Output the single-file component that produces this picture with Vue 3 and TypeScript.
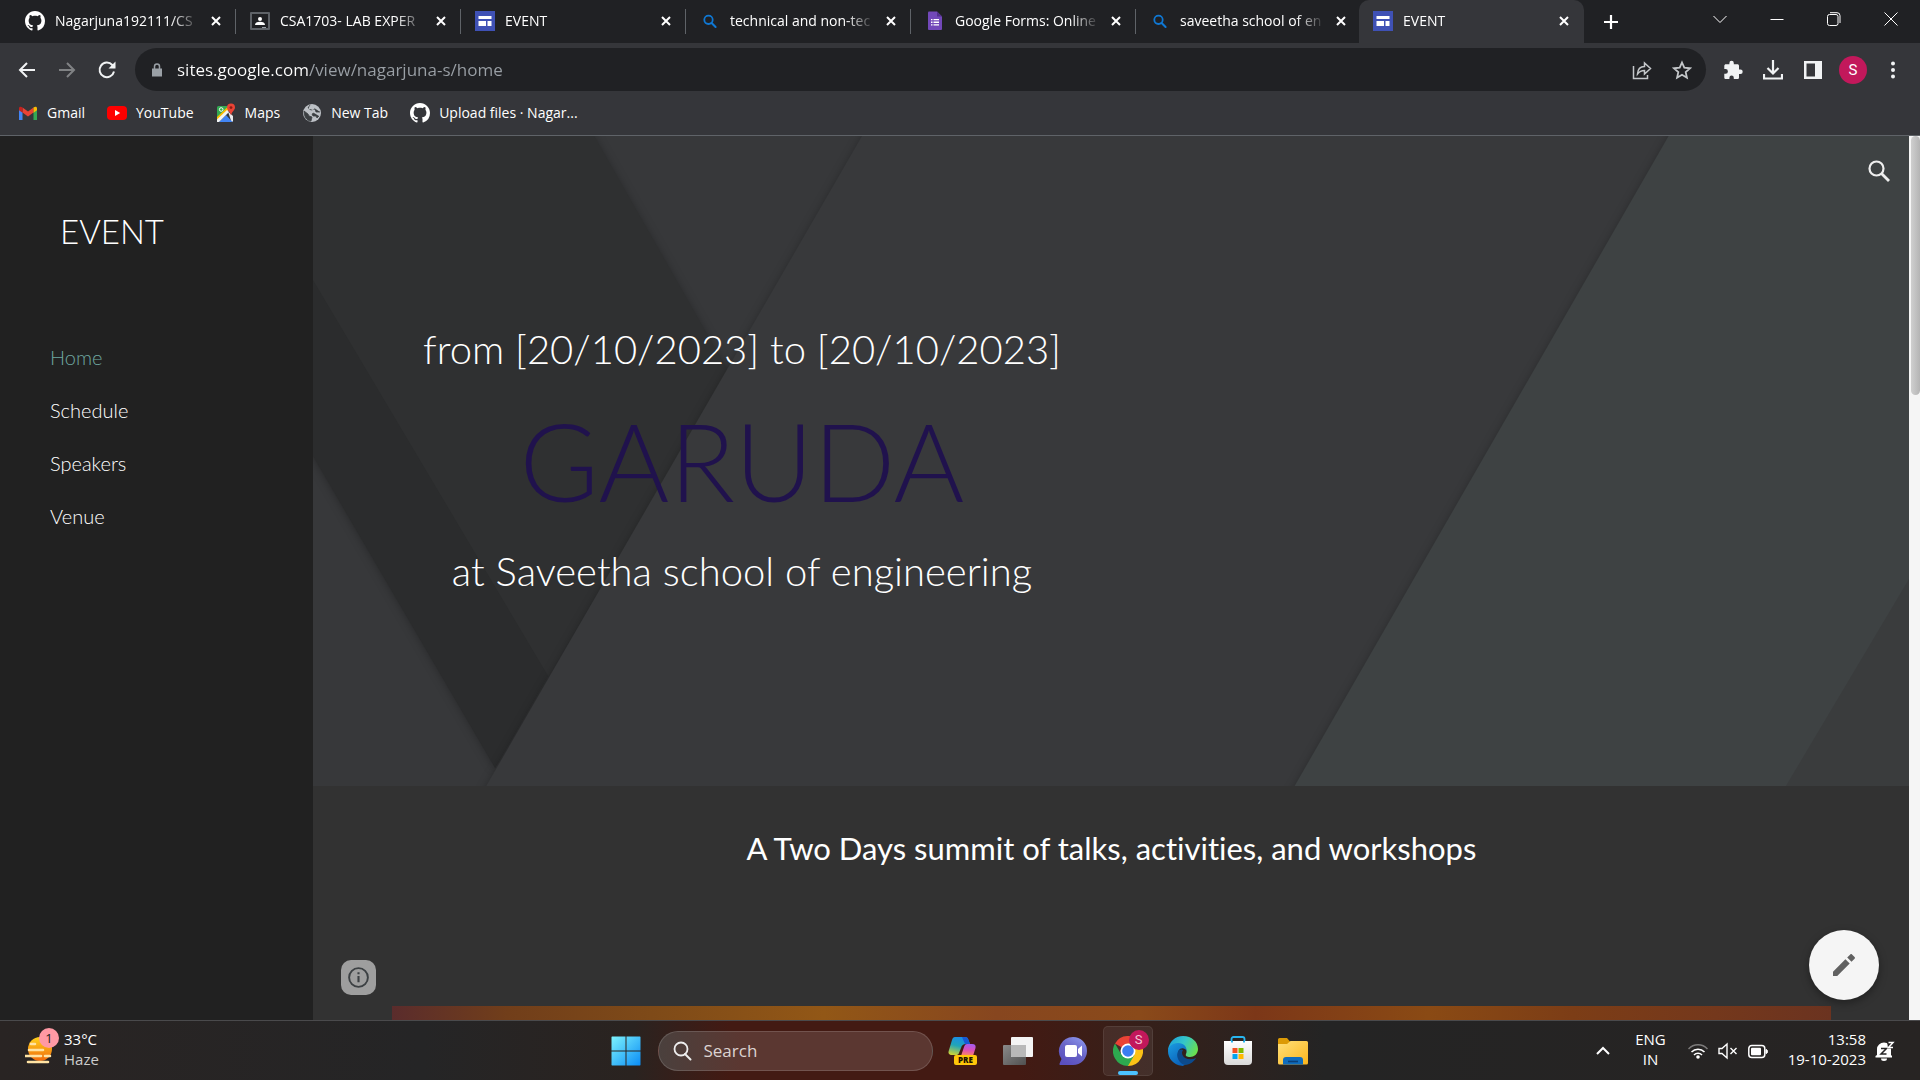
<script setup lang="ts">
import { ref } from 'vue'

interface Tab {
  title: string
  icon: string
  active?: boolean
}

const tabs: Tab[] = [
  { title: 'Nagarjuna192111/CS', icon: 'github' },
  { title: 'CSA1703- LAB EXPER', icon: 'classroom' },
  { title: 'EVENT', icon: 'sites' },
  { title: 'technical and non-tec', icon: 'lens' },
  { title: 'Google Forms: Online', icon: 'forms' },
  { title: 'saveetha school of en', icon: 'lens' },
  { title: 'EVENT', icon: 'sites', active: true },
]

const bookmarks = [
  { label: 'Gmail', icon: 'gmail' },
  { label: 'YouTube', icon: 'youtube' },
  { label: 'Maps', icon: 'maps' },
  { label: 'New Tab', icon: 'globe' },
  { label: 'Upload files · Nagar...', icon: 'github' },
]

const pages = ['Home', 'Schedule', 'Speakers', 'Venue']
const currentPage = ref('Home')
const address = ref('sites.google.com/view/nagarjuna-s/home')
const query = ref('')

const apps = [
  { name: 'Copilot', icon: 'copilot' },
  { name: 'Task view', icon: 'taskview' },
  { name: 'Chat', icon: 'chat' },
  { name: 'Google Chrome', icon: 'chrome', running: true },
  { name: 'Microsoft Edge', icon: 'edge' },
  { name: 'Microsoft Store', icon: 'store' },
  { name: 'File Explorer', icon: 'explorer' },
]
</script>

<template>
  <div class="desktop">
    <svg class="sprite" aria-hidden="true">
      <defs>
        <linearGradient id="gWin" x1="0" y1="0" x2="1" y2="1">
          <stop offset="0" stop-color="#7df3fd" /><stop offset="1" stop-color="#0a8cf5" />
        </linearGradient>
        <linearGradient id="gSun" x1="0" y1="0" x2="0" y2="1">
          <stop offset="0" stop-color="#ffd21c" /><stop offset="1" stop-color="#f06a0c" />
        </linearGradient>
        <linearGradient id="gCopL" x1="0.6" y1="0" x2="0.3" y2="1">
          <stop offset="0" stop-color="#1b8be8" /><stop offset="0.5" stop-color="#20a5b8" /><stop offset="1" stop-color="#c9d23a" />
        </linearGradient>
        <linearGradient id="gCopR" x1="0.5" y1="0" x2="0.4" y2="1">
          <stop offset="0" stop-color="#a45cf0" /><stop offset="0.5" stop-color="#dd4fb8" /><stop offset="1" stop-color="#fb8a5c" />
        </linearGradient>
        <linearGradient id="gTaskB" x1="0" y1="0" x2="1" y2="1">
          <stop offset="0" stop-color="#8a8a8a" /><stop offset="1" stop-color="#505050" />
        </linearGradient>
        <linearGradient id="gChat" x1="0.9" y1="0" x2="0.3" y2="1">
          <stop offset="0" stop-color="#8f9bf0" /><stop offset="0.5" stop-color="#6a66c8" /><stop offset="1" stop-color="#5a4fbe" />
        </linearGradient>
        <linearGradient id="gEdgeT" x1="0" y1="0.2" x2="1" y2="0.6">
          <stop offset="0" stop-color="#1c9fdc" /><stop offset="0.5" stop-color="#35c6c8" /><stop offset="1" stop-color="#6ae04e" />
        </linearGradient>
        <linearGradient id="gEdgeB" x1="0" y1="0" x2="0.6" y2="1">
          <stop offset="0" stop-color="#1b9de2" /><stop offset="1" stop-color="#0a60b8" />
        </linearGradient>
        <linearGradient id="gStore" x1="0" y1="0" x2="0" y2="1">
          <stop offset="0" stop-color="#ffffff" /><stop offset="1" stop-color="#d9d9d9" />
        </linearGradient>
        <linearGradient id="gFold" x1="0" y1="0" x2="1" y2="1">
          <stop offset="0" stop-color="#ffe07a" /><stop offset="1" stop-color="#fbb51c" />
        </linearGradient>
      </defs>
      <symbol id="i-github" viewBox="0 0 16 16">
        <path fill="#fff" d="M8 0C3.58 0 0 3.58 0 8c0 3.54 2.29 6.53 5.47 7.59.4.07.55-.17.55-.38 0-.19-.01-.82-.01-1.49-2.01.37-2.53-.49-2.69-.94-.09-.23-.48-.94-.82-1.13-.28-.15-.68-.52-.01-.53.63-.01 1.08.58 1.23.82.72 1.21 1.87.87 2.33.66.07-.52.28-.87.51-1.07-1.78-.2-3.64-.89-3.64-3.95 0-.87.31-1.59.82-2.15-.08-.2-.36-1.02.08-2.12 0 0 .67-.21 2.2.82.64-.18 1.32-.27 2-.27s1.36.09 2 .27c1.53-1.04 2.2-.82 2.2-.82.44 1.1.16 1.92.08 2.12.51.56.82 1.27.82 2.15 0 3.07-1.87 3.75-3.65 3.95.29.25.54.73.54 1.48 0 1.07-.01 1.93-.01 2.2 0 .21.15.46.55.38A8.01 8.01 0 0 0 16 8c0-4.42-3.58-8-8-8z" />
      </symbol>
      <symbol id="i-classroom" viewBox="0 0 20 20">
        <rect y="1" width="20" height="18" rx="1" fill="#5f6368" /><rect x="2" y="3" width="16" height="14" fill="#202124" />
        <circle cx="10" cy="8" r="2" fill="#fff" /><path d="M5 14c0-2 2-3.200 5-3.200s5 1.200 5 3.200z" fill="#fff" /><path d="M12 16h4v1h-4z" fill="#9aa0a6" />
      </symbol>
      <symbol id="i-sites" viewBox="0 0 20 20">
        <rect width="20" height="20" fill="#3f51b5" /><path d="M3.500 5h13v3h-13zM3.500 10h7.500v5H3.500zM12.500 10h4v5h-4z" fill="#fff" />
      </symbol>
      <symbol id="i-lens" viewBox="0 0 20 20">
        <circle cx="8.500" cy="8.800" r="4.200" fill="none" stroke="#0f78d4" stroke-width="1.800" /><path d="M11.600 12l4 4" stroke="#0f78d4" stroke-width="2" stroke-linecap="round" />
      </symbol>
      <symbol id="i-forms" viewBox="0 0 20 20">
        <path d="M3 1.500a1 1 0 0 1 1-1h8l5 5V18a1 1 0 0 1-1 1H4a1 1 0 0 1-1-1z" fill="#7248b9" /><path d="M12 .5l5 5h-5z" fill="#52308c" />
        <path d="M6 8h1.500v1.300H6zM6 10.600h1.500v1.300H6zM6 13.200h1.500v1.300H6zM8.500 8H14v1.300H8.500zM8.500 10.600H14v1.300H8.500zM8.500 13.200H14v1.300H8.500z" fill="#fff" />
      </symbol>
      <symbol id="i-gmail" viewBox="0 0 20 20">
        <path d="M1 17h3.500V9L1 6z" fill="#4285f4" /><path d="M15.500 17H19V6l-3.500 3z" fill="#34a853" />
        <path d="M4.500 4.500L10 8.600l5.500-4.100v5L10 13.500 4.500 9.500z" fill="#ea4335" /><path d="M1 5.200v2l3.500 2.600V4.500C2.600 3 1 3.700 1 5.200z" fill="#c5221f" /><path d="M19 5.200v2l-3.500 2.600V4.500C17.400 3 19 3.700 19 5.200z" fill="#fbbc04" />
      </symbol>
      <symbol id="i-youtube" viewBox="0 0 20 20">
        <rect y="3" width="20" height="14" rx="4" fill="#f00" /><path d="M8 7l5.200 3L8 13z" fill="#fff" />
      </symbol>
      <symbol id="i-maps" viewBox="0 0 20 20">
        <path d="M1 4.500A1.500 1.500 0 0 1 2.500 3H12v5l-11 10z" fill="#34a853" /><path d="M12 8.500l5 4.500v4.500a1.500 1.500 0 0 1-1.500 1.500z" fill="#e8eaed" /><path d="M3 19l7-7 6.500 7z" fill="#4285f4" /><path d="M1 14L12 3.500l1.500 3L1 18z" fill="#fbbc04" /><path d="M1 16.500l10-9.500 2 2L3 19H1z" fill="#f1f3f4" />
        <circle cx="5.200" cy="6.500" r="1.800" fill="none" stroke="#fff" /><path d="M15 .6a4 4 0 0 0-4 4c0 2.800 3 3.600 4 8 1-4.400 4-5.200 4-8a4 4 0 0 0-4-4z" fill="#ea4335" /><circle cx="15" cy="4.600" r="1.400" fill="#8c1d14" />
      </symbol>
      <symbol id="i-globe" viewBox="0 0 20 20">
        <circle cx="10" cy="10" r="9" fill="#bdc1c6" /><path d="M2 8l4 3 1 2 3 1-1 4c-4 0-7-4-7-10zM8 2l-2 3 3 2 4-1 1 3 4 0M12 10l-2 1 1 2h3l1 2 2-2" fill="#3c4043" stroke="#3c4043" stroke-width=".8" />
        <path d="M8 2c2 1 4 1 5 3l-2 2-3-1-2 1z" fill="#bdc1c6" />
      </symbol>
      <symbol id="i-copilot" viewBox="0 0 30 30">
        <path d="M7 1h10c2 0 3 1 3.500 3L22 8h-4c-3 0-4 1-5 4l-2 5c-.5 1.500-1.500 2-3 2H4c-3 0-4-2-3.300-4L4 4c.6-2 1.500-3 3-3z" fill="url(#gCopL)" />
        <path d="M14 1h3c2 0 3 1 3.500 3L22 8h-5z" fill="#1759d6" />
        <path d="M19 8h5c3 0 4 1.500 3.500 4l-2.500 8H13l3-9c.7-2 1.500-3 3-3z" fill="url(#gCopR)" />
        <rect x="6" y="19" width="23" height="10" rx="2" fill="#ffc70a" />
        <text x="17.500" y="27" text-anchor="middle" font-family="Open Sans, sans-serif" font-size="8" font-weight="800" fill="#1c1200">PRE</text>
      </symbol>
      <symbol id="i-taskview" viewBox="0 0 30 30">
        <rect y="9" width="23" height="20" rx="1" fill="url(#gTaskB)" /><rect x="8" y="1" width="22" height="20" rx="1" fill="#f4f4f4" /><path d="M8 9h15v12H9a1 1 0 0 1-1-1z" fill="#b9b9b9" />
      </symbol>
      <symbol id="i-chat" viewBox="0 0 30 30">
        <path d="M15 1a14 14 0 1 1 0 28H2.500c-1 0-1.400-1-.8-1.800L3.500 23A14 14 0 0 1 15 1z" fill="url(#gChat)" />
        <rect x="7" y="9" width="12" height="12" rx="2" fill="#fff" /><path d="M20 13l4-3.500v11L20 17z" fill="#fff" />
      </symbol>
      <symbol id="i-chrome" viewBox="0 0 30 30">
        <path d="M15 15L2 7.500A15 15 0 0 1 28 7.500H15z" fill="#ea4335" /><path d="M15 15V7.500h13A15 15 0 0 1 15 30z" fill="#fbc116" /><path d="M2 7.500A15 15 0 0 0 15 30l6.500-11.200L15 15 8.500 18.800z" fill="#2da94f" />
        <circle cx="15" cy="15" r="7.500" fill="#fff" /><circle cx="15" cy="15" r="5.800" fill="#3b7df0" />
      </symbol>
      <symbol id="i-edge" viewBox="0 0 30 30">
        <path d="M0 14C1 6 7 0 15 0c9 0 15 6 15 13 0 5-4 8-8 8-3 0-5-1-4-3 2-4-1-8-6-8C6 10 1 13 0 14z" fill="url(#gEdgeT)" />
        <path d="M0 15c0-4 4-8 10-8 6 0 9 4 8.500 8-1-3-6-4-8 0-2 5 1 11 7 13-1.500 2-3 2-4 1.800C6 29 0 23 0 15z" fill="url(#gEdgeB)" />
        <path d="M10.500 14.500C7 20 11 27.500 17 29c5 0 9.500-4 11-7-5 2.500-11.500 1.500-13.500-3-.8-2-.5-3.500.5-5-1.500-.8-3.500-.5-4.500.5z" fill="#0c4a8c" />
      </symbol>
      <symbol id="i-store" viewBox="0 0 30 30">
        <path d="M8.500 6V3a2 2 0 0 1 2-2h9a2 2 0 0 1 2 2v3" fill="none" stroke="#28b6f0" stroke-width="1.800" /><path d="M1 5h28v20a4 4 0 0 1-4 4H5a4 4 0 0 1-4-4z" fill="url(#gStore)" /><path d="M8 5h2v1.500H8zM20 5h2v1.500h-2z" fill="#28b6f0" />
        <path d="M9.500 12h5v5h-5z" fill="#f25022" /><path d="M15.500 12h5v5h-5z" fill="#7fba00" /><path d="M9.500 18h5v5h-5z" fill="#00a4ef" /><path d="M15.500 18h5v5h-5z" fill="#ffb900" />
      </symbol>
      <symbol id="i-explorer" viewBox="0 0 30 30">
        <path d="M0 8V3.500A1.500 1.500 0 0 1 1.500 2H9l3 3.500V8z" fill="#dc9a06" /><path d="M0 8h9l3.500-3H28.500A1.500 1.500 0 0 1 30 6.500V27a1.500 1.500 0 0 1-1.500 1.500h-27A1.500 1.500 0 0 1 0 27z" fill="url(#gFold)" />
        <path d="M5 28.500V24a3 3 0 0 1 3-3h14a3 3 0 0 1 3 3v4.500z" fill="#0f6cbd" /><path d="M10 25.500h10" stroke="#0a3f78" stroke-width="1.600" />
      </symbol>
    </svg>

    <header class="browser">
      <div class="tab-strip">
        <div class="tabs" role="tablist">
          <div v-for="(tab, i) in tabs" :key="i" class="tab" :class="{ active: tab.active }">
            <svg class="favicon"><use :href="'#i-' + tab.icon" /></svg>
            <span class="tab-title">{{ tab.title }}</span>
            <button class="close" aria-label="Close tab">
              <svg viewBox="0 0 12 12"><path d="M2 2l8 8M10 2l-8 8" stroke="#fff" stroke-width="2" /></svg>
            </button>
          </div>
        </div>
        <button class="new-tab" aria-label="New tab">
          <svg viewBox="0 0 16 16"><path d="M8 1v14M1 8h14" stroke="#fff" stroke-width="2.200" /></svg>
        </button>
        <div class="window-controls">
          <button aria-label="Search tabs"><svg viewBox="0 0 14 14"><path d="M.5 4L7 10.500 13.500 4" /></svg></button>
          <button aria-label="Minimize"><svg viewBox="0 0 14 14"><path d="M.5 7.500h13" /></svg></button>
          <button aria-label="Restore"><svg viewBox="0 0 14 14"><rect x=".5" y="2.500" width="10.500" height="11" rx="2" /><path d="M3 .7h7a3 3 0 0 1 3 3V11" /></svg></button>
          <button aria-label="Close"><svg viewBox="0 0 14 14"><path d="M.5 .5l13 13M13.500 .5l-13 13" /></svg></button>
        </div>
      </div>

      <div class="toolbar">
        <div class="nav-buttons">
          <button aria-label="Back"><svg viewBox="0 0 20 20"><path d="M18 10H3M10 3l-7 7 7 7" /></svg></button>
          <button aria-label="Forward" class="dim"><svg viewBox="0 0 20 20"><path d="M2 10h15M10 3l7 7-7 7" /></svg></button>
          <button aria-label="Reload"><svg viewBox="0 0 20 20"><path d="M17 11.500A7.300 7.300 0 1 1 15.300 5L17.500 7.500" /><path d="M18.500 1.500v7h-7z" fill="#f1f3f4" stroke="none" /></svg></button>
        </div>
        <div class="omnibox">
          <svg class="lock" viewBox="0 0 12 16"><path d="M1 6.500h10v8H1z" fill="#9aa0a6" /><path d="M3.500 7V4.500a2.500 2.500 0 0 1 5 0V7" fill="none" stroke="#9aa0a6" stroke-width="1.500" /></svg>
          <input v-model="address" class="address" aria-label="Address" spellcheck="false" />
          <button aria-label="Share"><svg viewBox="0 0 20 20"><path d="M1.500 6v12.500h14V15M5.500 14c.3-5 3-7.500 7-7.500V3l6 5.500-6 5.500v-3.500c-3 0-5 .8-7 3.500z" /></svg></button>
          <button aria-label="Bookmark this page"><svg viewBox="0 0 20 20"><path d="M10 2.500l2.300 5.200 5.700.6-4.300 3.800 1.200 5.600L10 14.800l-4.900 2.900 1.200-5.600L2 8.300l5.700-.6z" stroke-width="1.800" /></svg></button>
        </div>
        <div class="actions">
          <button aria-label="Extensions"><svg viewBox="0 0 20 20"><path fill="#f1f3f4" d="M17.500 9.500H16V5.800c0-.9-.7-1.600-1.600-1.600h-3.600V3a2.200 2.200 0 0 0-4.400 0v1.200H2.900c-.9 0-1.600.7-1.600 1.600v3.300h1.300a2.300 2.300 0 0 1 0 4.600H1.300v3.700c0 .9.700 1.600 1.600 1.600h3.500v-1.200a2.200 2.200 0 0 1 4.400 0V19h3.600c.9 0 1.600-.7 1.600-1.600v-3.500h1.500a2.200 2.200 0 0 0 0-4.400z" /></svg></button>
          <button aria-label="Downloads"><svg viewBox="0 0 20 20"><path d="M10 0v13M4.500 8l5.500 5.500L15.500 8M1 14v4.500h18V14" fill="none" stroke="#f1f3f4" stroke-width="2.200" /></svg></button>
          <button aria-label="Side panel"><svg viewBox="0 0 20 20"><path fill="#f1f3f4" fill-rule="evenodd" d="M1 1h18v18H1zM3.500 3.500v13h8.500v-13z" /></svg></button>
          <button aria-label="Profile" class="avatar">S</button>
          <button aria-label="Menu"><svg viewBox="0 0 20 20" fill="#f1f3f4"><circle cx="10" cy="3.500" r="2" /><circle cx="10" cy="10" r="2" /><circle cx="10" cy="16.500" r="2" /></svg></button>
        </div>
      </div>

      <nav class="bookmarks" aria-label="Bookmarks">
        <a v-for="b in bookmarks" :key="b.label" href="#"><svg class="favicon"><use :href="'#i-' + b.icon" /></svg>{{ b.label }}</a>
      </nav>
    </header>

    <div class="viewport">
      <aside class="sidebar">
        <a class="brand" href="#">EVENT</a>
        <nav class="pages">
          <a v-for="p in pages" :key="p" href="#" :class="{ current: p === currentPage }" @click.prevent="currentPage = p">{{ p }}</a>
        </nav>
      </aside>

      <main class="site">
        <section class="hero">
          <svg class="hero-art" viewBox="0 0 1595 650" preserveAspectRatio="none" aria-hidden="true">
            <defs>
              <filter id="fold" x="-10%" y="-10%" width="120%" height="120%" color-interpolation-filters="sRGB"><feDropShadow dx="0" dy="1" stdDeviation="4" flood-color="#000" flood-opacity="0.25" /></filter>
            </defs>
            <rect width="1595" height="650" fill="#37383a" />
            <g filter="url(#fold)"><path d="M-30 -30H264L415 235 182 632 -30 270z" fill="#2f3031" /></g>
            <path d="M0 144L235 540 182 632 0 320z" fill="#2b2c2d" />
            <g filter="url(#fold)"><path d="M566 -30H1700V690H150z" fill="#38393b" /></g>
            <g filter="url(#fold)"><path d="M1372 -30H1700V690H958z" fill="#3e4243" /></g>
            <path d="M1595 443V650H1472z" fill="#3a3c3d" />
          </svg>
          <div class="hero-text">
            <p class="lead">from [20/10/2023] to [20/10/2023]</p>
            <h1>GARUDA</h1>
            <p class="lead">at Saveetha school of engineering</p>
          </div>
          <button class="site-search" aria-label="Search this site">
            <svg viewBox="0 0 24 24"><circle cx="9.500" cy="9.500" r="7" fill="none" stroke="#eee" stroke-width="2.200" /><path d="M14.500 14.500l7.500 7.500" stroke="#eee" stroke-width="2.800" /></svg>
          </button>
        </section>
        <section class="summit">
          <h2>A Two Days summit of talks, activities, and workshops</h2>
          <div class="photo"></div>
        </section>
        <button class="info" aria-label="Page details">
          <svg viewBox="0 0 24 24"><circle cx="12" cy="12" r="9.800" fill="none" stroke="#3c4043" stroke-width="2" /><path d="M12 10.500V17M12 6.500v2.200" stroke="#3c4043" stroke-width="2.200" /></svg>
        </button>
        <button class="edit" aria-label="Edit page">
          <svg viewBox="0 0 24 24" fill="#616161"><path d="M1 18.800V23h4.200L17.700 10.600l-4.300-4.300zM22.600 5.700c.5-.5.5-1.200 0-1.700L20 1.400c-.5-.5-1.200-.5-1.700 0L15.200 4.500l4.300 4.300z" /></svg>
        </button>
      </main>
      <div class="scrollbar"><div class="thumb"></div></div>
    </div>

    <footer class="taskbar">
      <button class="weather">
        <svg viewBox="0 0 30 34"><circle cx="15" cy="17" r="12" fill="url(#gSun)" /><path d="M6 12h4M4 18h14M0 24h16M20 24h5M3 30h20" stroke="#ffe3a3" stroke-width="2.600" stroke-linecap="round" /></svg>
        <span class="alert">1</span>
        <span class="forecast"><b>33°C</b><i>Haze</i></span>
      </button>

      <div class="launcher">
        <button class="app" aria-label="Start">
          <svg viewBox="0 0 30 30" fill="url(#gWin)"><path d="M1 .5h13.500v14H.5V1zM15.500 .5H29l.5.5v13.500h-14zM.5 15.500h14v14H1l-.5-.5zM15.500 15.500h14V29l-.5.5H15.500z" /></svg>
        </button>
        <label class="search">
          <svg viewBox="0 0 20 20"><circle cx="9" cy="8" r="6.500" fill="none" stroke="#eee" stroke-width="1.800" /><path d="M13 13l5.500 5.500" stroke="#eee" stroke-width="2" stroke-linecap="round" /></svg>
          <input v-model="query" placeholder="Search" aria-label="Search" />
        </label>
        <button v-for="a in apps" :key="a.name" class="app" :class="{ running: a.running }" :aria-label="a.name">
          <svg><use :href="'#i-' + a.icon" /></svg>
          <span v-if="a.running" class="profile">S</span>
        </button>
      </div>

      <div class="tray">
        <button aria-label="Show hidden icons"><svg class="caret" viewBox="0 0 14 10"><path d="M1 8l6-6 6 6" fill="none" stroke="#fff" stroke-width="2" /></svg></button>
        <button class="lang">ENG<br />IN</button>
        <button class="status" aria-label="Network, sound and battery">
          <svg viewBox="0 0 20 20" fill="none" stroke="#fff" stroke-width="1.500"><path d="M.5 8a13 13 0 0 1 19 0" opacity=".4" /><path d="M3.500 11a9 9 0 0 1 13 0M6 14a5.500 5.500 0 0 1 8 0" /><circle cx="10" cy="16" r="1.800" fill="#fff" stroke="none" /></svg>
          <svg viewBox="0 0 20 20" fill="none" stroke="#fff" stroke-width="1.400"><path d="M1 7.500v5h3l5 4.500V3L4 7.500zM12.500 7l6 6M18.500 7l-6 6" /></svg>
          <svg viewBox="0 0 20 20"><rect x=".8" y="4.500" width="16" height="12" rx="3" fill="none" stroke="#fff" stroke-width="1.500" /><rect x="3" y="6.800" width="10" height="7.500" rx="1" fill="#fff" /><path d="M18 8.500c2 0 2 4 0 4z" fill="#fff" stroke="#fff" /></svg>
        </button>
        <button class="clock">13:58<br />19-10-2023</button>
        <button aria-label="Notifications" class="bell">
          <svg viewBox="0 0 20 20"><path d="M2 14V8a7 6.500 0 0 1 14 0v6l1 1v1.500H.5V15z" fill="#fff" /><path d="M6 17.500h6a3 2.500 0 0 1-6 0z" fill="#fff" /><path d="M6 7.500h5.500L6 13h5.500" fill="none" stroke="#262425" stroke-width="1.500" /><path d="M12 0h8v7.500h-7z" fill="#262425" /><path d="M13.500 1.500H18l-4.500 5H18" fill="none" stroke="#fff" stroke-width="1.500" /></svg>
        </button>
      </div>
    </footer>
  </div>
</template>

<style>
body {
  background: #202124;
  overflow: hidden;
}
</style>

<style scoped>
.desktop {
  display: flex;
  flex-direction: column;
  height: 100vh;
  font-family: 'Open Sans', 'Noto Sans', sans-serif;
  color: #fff;
}
.desktop * { box-sizing: border-box; }
.sprite { position: absolute; width: 0; height: 0; }
button { border: 0; padding: 0; background: none; color: inherit; font: inherit; }
button svg { display: block; }
a { color: inherit; text-decoration: none; }

.browser { flex: none; background: #35363a; border-bottom: 1px solid #5f6368; }
.tab-strip { display: flex; height: 43px; background: #202124; padding-left: 11px; }
.tabs { display: flex; }
.tab {
  position: relative;
  display: flex;
  align-items: center;
  width: 225px;
  padding: 0 14px 2px;
  font-size: 14px;
}
.tab::after { content: ''; position: absolute; right: 0; top: 9px; width: 1px; height: 25px; background: #5f6368; }
.tab:nth-last-child(2)::after,
.tab.active::after { display: none; }
.tab.active { margin-left: -2px; background: #35363a; border-radius: 10px 10px 0 0; }
.favicon { flex: none; width: 20px; height: 20px; }
.tab-title {
  flex: 1;
  margin: 0 10px;
  overflow: hidden;
  white-space: nowrap;
  -webkit-mask-image: linear-gradient(90deg, #000 80%, transparent);
  mask-image: linear-gradient(90deg, #000 80%, transparent);
}
.close svg { width: 12px; height: 12px; }
.new-tab { width: 54px; display: grid; place-items: center; }
.new-tab svg { width: 16px; height: 16px; }
.window-controls { display: flex; margin-left: auto; padding-right: 1px; height: 37px; }
.window-controls button { width: 57px; display: grid; place-items: center; }
.window-controls svg { width: 14px; height: 14px; fill: none; stroke: #fff; stroke-width: 1; }

.toolbar { display: flex; align-items: center; height: 53px; padding: 0 7px; }
.nav-buttons { display: flex; width: 128px; }
.nav-buttons button { width: 40px; display: grid; place-items: center; }
.nav-buttons svg { width: 20px; height: 20px; fill: none; stroke: #f1f3f4; stroke-width: 2; }
.nav-buttons .dim { opacity: .4; }
.omnibox {
  flex: 1;
  display: flex;
  align-items: center;
  height: 43px;
  padding: 0 4px 0 16px;
  border-radius: 22px;
  background: #202124;
}
.lock { width: 12px; height: 16px; }
.address {
  flex: 1;
  min-width: 0;
  margin-left: 14px;
  padding: 0;
  border: 0;
  outline: 0;
  font: 17px 'Open Sans', 'Noto Sans', sans-serif;
  color: #fff;
  background: linear-gradient(90deg, #fff 131px, #9aa0a6 131px);
  -webkit-background-clip: text;
  background-clip: text;
  -webkit-text-fill-color: transparent;
}
.omnibox button { width: 40px; display: grid; place-items: center; }
.omnibox button svg { width: 20px; height: 20px; fill: none; stroke: #c4c7ca; stroke-width: 1.500; }
.actions { display: flex; align-items: center; margin-left: 7px; }
.actions button { width: 40px; height: 40px; display: grid; place-items: center; }
.actions svg { width: 20px; height: 20px; }
.actions .avatar { width: 28px; height: 28px; margin: 0 6px; border-radius: 50%; background: #c2185b; font: 15px Roboto, sans-serif; }
.bookmarks { display: flex; align-items: center; gap: 22px; height: 39px; padding: 0 18px 6px; font-size: 14px; }
.bookmarks a { display: flex; align-items: center; gap: 9px; white-space: nowrap; }

.viewport { flex: 1; display: flex; min-height: 0; font-family: Lato, sans-serif; }
.sidebar { flex: none; width: 313px; background: #212121; padding: 75px 50px 0; font-weight: 300; }
.brand { display: block; padding-left: 10px; font-size: 33px; line-height: 40px; }
.pages { display: flex; flex-direction: column; margin-top: 80px; font-size: 20px; line-height: 53px; }
.pages .current { color: #6fa8a0; }
.site { position: relative; flex: 1; min-width: 0; overflow: hidden; background: #323232; font-weight: 300; }
.hero { position: relative; height: 650px; overflow: hidden; }
.hero-art { position: absolute; inset: 0; width: 100%; height: 100%; }
.hero-text { position: relative; width: 858px; padding-top: 181px; text-align: center; }
.hero-text p, .hero-text h1 { margin: 0; }
.lead { font-size: 40px; line-height: 64px; }
h1 { font-size: 108px; line-height: 158px; font-weight: 300; color: #20124d; }
.site-search { position: absolute; right: 18px; top: 23px; }
.site-search svg { width: 24px; height: 24px; }
.summit { padding: 39px 78px 0 79px; }
h2 { margin: 0; font-size: 31px; line-height: 46px; font-weight: 400; text-align: center; font-variant-ligatures: none; }
.photo {
  height: 400px;
  margin-top: 135px;
  background: linear-gradient(90deg, #5a2c2c, #713e1a 8%, #7e4a18 18%, #925716 30%, #87461f 42%, #8a4a1a 52%, #7c3718 60%, #8a4a14 72%, #7c3d16 82%, #74381c 92%, #6b3320);
}
.info { position: absolute; left: 28px; bottom: 25px; width: 35px; height: 35px; display: grid; place-items: center; border-radius: 10px; background: #9e9e9e; }
.info svg { width: 23px; height: 23px; }
.edit { position: absolute; right: 30px; bottom: 20px; width: 70px; height: 70px; display: grid; place-items: center; border-radius: 50%; background: #f5f5f5; box-shadow: 0 3px 8px rgba(0, 0, 0, .35); }
.edit svg { width: 24px; height: 24px; }
.scrollbar { flex: none; width: 11px; padding-left: 2px; background: #f5f5f5; }
.thumb { height: 259px; border-radius: 6px; background: linear-gradient(90deg, #cfcfcf, #b4b4b4); }

.taskbar {
  flex: none;
  display: grid;
  grid-template-columns: 1fr auto 1fr;
  align-items: center;
  height: 60px;
  border-top: 1px solid #4a4a4c;
  background: linear-gradient(90deg, #292423, #252526 22%, #2a2320 33%, #431a13 38%, #431a13 53%, #35201a 60%, #242424 69%, #272423);
  font-size: 15px;
  line-height: 20px;
}
.weather { position: relative; display: flex; align-items: center; justify-self: start; margin: 0 0 4px 25px; gap: 9px; text-align: left; }
.weather svg { width: 30px; height: 34px; }
.alert { position: absolute; left: 14px; top: -1px; width: 20px; height: 20px; border-radius: 50%; background: #ff99a4; color: #222; font-size: 13px; text-align: center; }
.forecast { display: flex; flex-direction: column; }
.forecast b, .forecast i { font-weight: 400; font-style: normal; }
.forecast i { color: #ccc; }
.launcher { display: flex; align-items: center; gap: 5px; padding-right: 2px; }
.app { position: relative; width: 50px; height: 50px; display: grid; place-items: center; border: 1px solid transparent; border-radius: 5px; }
.app svg { width: 30px; height: 30px; }
.running { background: rgba(255, 255, 255, .07); border-color: rgba(255, 255, 255, .08); }
.running::after { content: ''; position: absolute; left: 14px; bottom: 0; width: 20px; height: 4px; border-radius: 2px; background: #4cc2ff; }
.profile { position: absolute; right: 3px; top: 3px; width: 20px; height: 20px; border-radius: 50%; background: #c2185b; color: #f3c6d6; font: 13px/20px Roboto, sans-serif; }
.search {
  display: flex;
  align-items: center;
  gap: 12px;
  width: 275px;
  height: 40px;
  margin: 0 0 0 2px;
  padding: 0 13px;
  border: 1px solid rgba(255, 255, 255, .14);
  border-radius: 20px;
  background: linear-gradient(90deg, #4a403d, #5b3731 30%, #5b3731);
}
.search svg { flex: none; width: 20px; height: 20px; }
.search input { flex: 1; min-width: 0; padding: 0; border: 0; outline: 0; background: none; color: #fff; font: 17px 'Open Sans', 'Noto Sans', sans-serif; }
.search input::placeholder { color: #dcd3d1; opacity: 1; }
.tray { display: flex; align-items: center; justify-self: end; padding-right: 25px; }
.caret { width: 14px; height: 10px; }
.lang { margin: 0 0 4px 25px; text-align: center; }
.status { display: flex; gap: 10px; margin-left: 22px; }
.status svg { width: 20px; height: 20px; }
.clock { margin: 0 0 4px 20px; text-align: right; }
.bell { margin-left: 9px; }
.bell svg { width: 20px; height: 20px; }
</style>
